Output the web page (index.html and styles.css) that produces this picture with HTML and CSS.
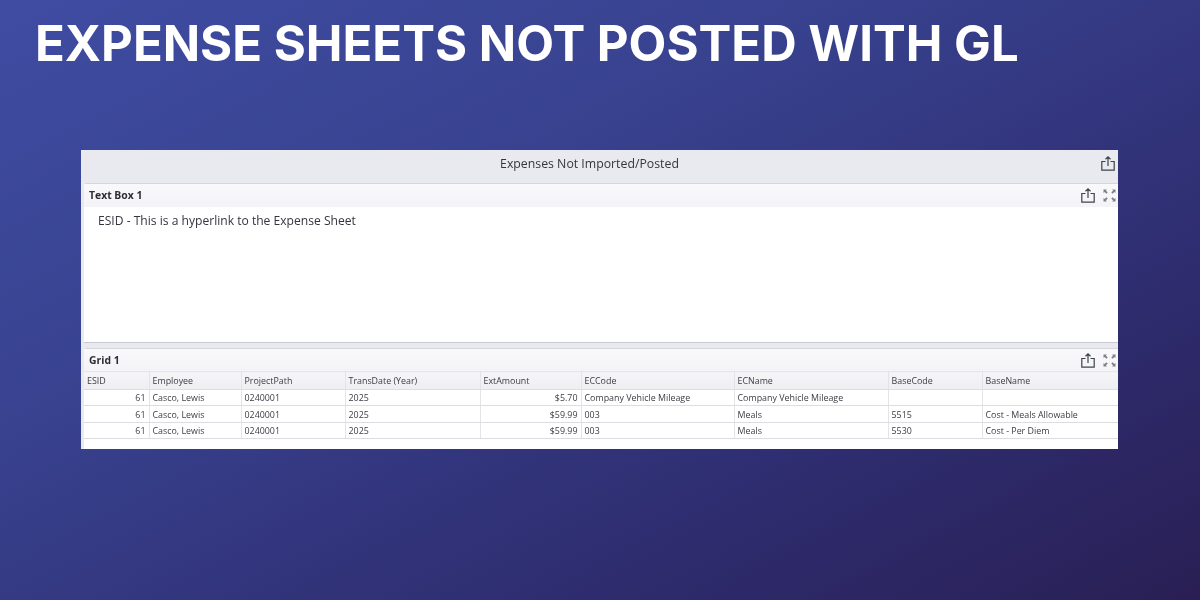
FILE: index.html
```html
<!DOCTYPE html>
<html lang="en">
<head>
<meta charset="utf-8">
<title>Expense Sheets Not Posted With GL</title>
<link rel="stylesheet" href="styles.css">
</head>
<body>
<svg class="defs" width="0" height="0" aria-hidden="true">
  <symbol id="share" viewBox="0 0 14 15">
    <path d="M4.500 5.500H.8v8.700h12.400V5.500H9.500M7 10V1M4.500 3.300 7 .9l2.500 2.400" fill="none" stroke="currentColor" stroke-width="1.200"/>
  </symbol>
  <symbol id="expand" viewBox="0 0 13 13">
    <path d="M.5.500h3.500L2.900 1.600 4.700 3.400 3.400 4.700 1.600 2.900.5 4zM12.500.500H9l1.100 1.100-1.800 1.800 1.300 1.300 1.800-1.800L12.500 4zM.5 12.500H4l-1.100-1.100 1.800-1.800-1.300-1.300-1.800 1.800L.5 9zM12.500 12.500H9l1.100-1.100-1.800-1.800 1.300-1.300 1.800 1.800L12.500 9z" fill="currentColor"/>
  </symbol>
</svg>
<main class="slide">
  <h1 class="title">EXPENSE SHEETS NOT POSTED WITH GL</h1>
  <section class="dashboard">
    <header class="dash-head">
      <span class="dash-title">Expenses Not Imported/Posted</span>
      <svg class="icon share dash-share"><use href="#share"/></svg>
    </header>
    <section class="item textbox">
      <header class="item-head">
        <span class="item-title">Text Box 1</span>
        <svg class="icon share"><use href="#share"/></svg>
        <svg class="icon expand"><use href="#expand"/></svg>
      </header>
      <p class="note">ESID - This is a hyperlink to the Expense Sheet</p>
    </section>
    <section class="item gridbox">
      <header class="item-head">
        <span class="item-title">Grid 1</span>
        <svg class="icon share"><use href="#share"/></svg>
        <svg class="icon expand"><use href="#expand"/></svg>
      </header>
      <table class="grid">
        <colgroup>
          <col class="c1"><col class="c2"><col class="c3"><col class="c4"><col class="c5"><col class="c6"><col class="c7"><col class="c8"><col class="c9">
        </colgroup>
        <thead>
          <tr><th>ESID</th><th>Employee</th><th>ProjectPath</th><th>TransDate (Year)</th><th>ExtAmount</th><th>ECCode</th><th>ECName</th><th>BaseCode</th><th>BaseName</th></tr>
        </thead>
        <tbody>
          <tr><td class="num">61</td><td>Casco, Lewis</td><td>0240001</td><td>2025</td><td class="num">$5.70</td><td>Company Vehicle Mileage</td><td>Company Vehicle Mileage</td><td></td><td></td></tr>
          <tr><td class="num">61</td><td>Casco, Lewis</td><td>0240001</td><td>2025</td><td class="num">$59.99</td><td>003</td><td>Meals</td><td>5515</td><td>Cost - Meals Allowable</td></tr>
          <tr><td class="num">61</td><td>Casco, Lewis</td><td>0240001</td><td>2025</td><td class="num">$59.99</td><td>003</td><td>Meals</td><td>5530</td><td>Cost - Per Diem</td></tr>
        </tbody>
      </table>
    </section>
  </section>
</main>
</body>
</html>
```
FILE: styles.css
```css
* { box-sizing: border-box; }
html, body { margin: 0; height: 100%; }
body { overflow: hidden; }
.defs { position: absolute; }
.slide {
  width: 1200px;
  height: 600px;
  padding: 10px 82px 0 81px;
  background: linear-gradient(152deg, #3f4ca2 0%, #38428f 35%, #2f2e72 70%, #291f54 100%);
}
.title {
  margin: 0 0 0 -46px;
  height: 140px;
  font-family: "Inter", "Noto Sans", sans-serif;
  font-size: 49.100px;
  line-height: 66px;
  font-weight: 700;
  color: #fff;
  white-space: nowrap;
}
.dashboard {
  height: 299px;
  background: #e9eaef;
  color: #333;
  font-family: "Open Sans", "Noto Sans", sans-serif;
  filter: blur(0.3px);
  overflow: hidden;
}
.dash-head {
  height: 33px;
  padding: 0 20px 6px 0;
  display: flex;
  align-items: center;
  justify-content: center;
  position: relative;
}
.dash-title { font-size: 12.300px; color: #35353b; }
.dash-share { position: absolute; right: 3px; top: 6px; }
.icon { display: block; flex: none; }
.share { width: 14px; height: 15px; color: #3f4347; }
.expand { width: 13px; height: 13px; color: #7d8187; margin-left: 8px; margin-right: 2px; }
.item {
  margin-left: 3px;
  background: #fff;
  border-radius: 3px 0 0 0;
  border-top: 1px solid #d5d5dc;
}
.textbox { height: 160px; border-bottom: 1px solid #c8c8ce; }
.gridbox { height: 101px; margin-top: 5px; }
.item-head {
  height: 23px;
  padding: 0 0 0 5px;
  display: flex;
  align-items: center;
  background: linear-gradient(#f9f9fb, #f4f4f8);
}
.gridbox .item-head { height: 22px; }
.item-title {
  flex: 1;
  font-size: 10.400px;
  font-weight: 700;
  color: #2d2d33;
}
.textbox .item-title { padding-bottom: 2px; }
.note {
  margin: 0;
  padding: 6px 0 0 14px;
  font-size: 12.100px;
  line-height: 16px;
  color: #33363f;
}
.grid {
  width: 1034px;
  table-layout: fixed;
  border-collapse: collapse;
  font-size: 8.900px;
  color: #3a3d44;
}
.c1 { width: 65px; }
.c2 { width: 92px; }
.c3 { width: 104px; }
.c4 { width: 135px; }
.c5 { width: 101px; }
.c6 { width: 153px; }
.c7 { width: 154px; }
.c8 { width: 94px; }
.c9 { width: 136px; }
.grid th, .grid td {
  padding: 0 3px;
  text-align: left;
  font-weight: 400;
  white-space: nowrap;
  overflow: hidden;
  border-right: 1px solid #e3e3e8;
  border-bottom: 1px solid #dcdce2;
}
.grid th {
  height: 18px;
  background: linear-gradient(#f6f6f8, #eeeef2);
  border-top: 1px solid #e6e6ea;
}
.grid td { height: 16px; background: #fff; }
.grid tbody tr:nth-child(2) td { height: 17px; }
.grid .num { text-align: right; }
```
